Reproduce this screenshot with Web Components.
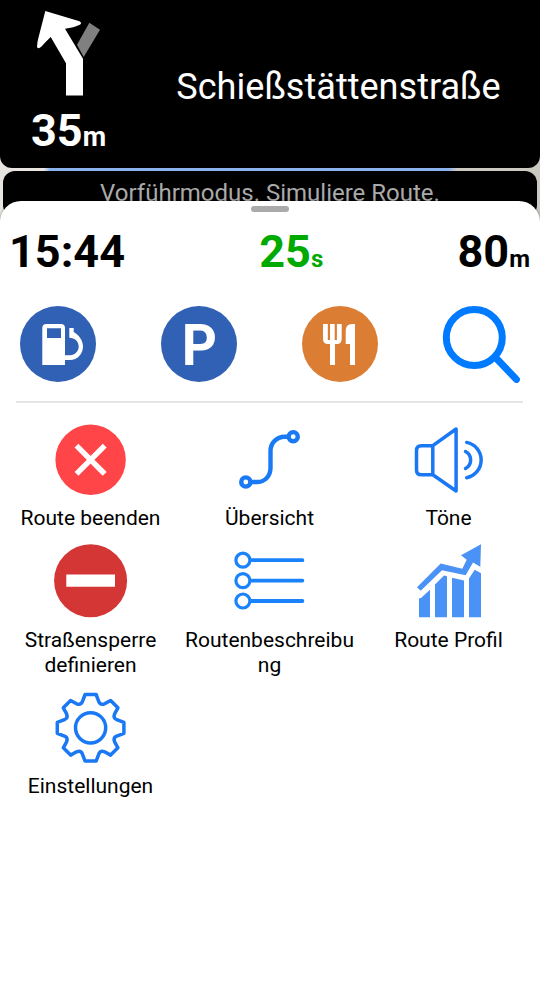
<!DOCTYPE html>
<html lang="de">
<head>
<meta charset="utf-8">
<title>Navigation</title>
<style>
    html, body {
        margin: 0;
        height: 100%;
        overflow: hidden;
        font-family: Roboto, "Liberation Sans", sans-serif;
    }
</style>
</head>
<body>
<nav-screen>
    <turn-banner distance="35" unit="m" street="Schießstättenstraße"></turn-banner>
    <demo-notice>Vorführmodus. Simuliere Route.</demo-notice>
    <bottom-sheet>
        <trip-status>
            <trip-value value="15:44"></trip-value>
            <trip-value value="25" unit="s" style="color: #00aa00"></trip-value>
            <trip-value value="80" unit="m"></trip-value>
        </trip-status>
        <quick-search>
            <nav-icon name="fuel" size="76"></nav-icon>
            <nav-icon name="parking" size="76"></nav-icon>
            <nav-icon name="food" size="76"></nav-icon>
            <nav-icon name="search" size="76"></nav-icon>
        </quick-search>
        <action-grid>
            <action-tile icon="close">Route beenden</action-tile>
            <action-tile icon="route">Übersicht</action-tile>
            <action-tile icon="sound">Töne</action-tile>
            <action-tile icon="block">Straßensperre definieren</action-tile>
            <action-tile icon="list">Routenbeschreibung</action-tile>
            <action-tile icon="profile">Route Profil</action-tile>
            <action-tile icon="settings">Einstellungen</action-tile>
        </action-grid>
    </bottom-sheet>
</nav-screen>
<script>
const icons = {
    turn: `<path fill="#808080" d="M89.3 22.7L100 29.7L83.7 57L77 44.7Z"/>
        <path fill="#fff" d="M45.3 11L79.5 21.2Q82.5 23 79.8 24.8Q74 27.8 65 28.7L83 58.7V95.5H66V63.3L50.7 37Q46 41.5 41.5 46.5Q38 49.8 37 46.7Q37.2 42 38.5 37.5Z"/>`,
    fuel: `<circle cx="38" cy="38" r="38" fill="#3061b5"/>
        <path fill="#fff" fill-rule="evenodd" d="M22.3 59V22Q22.3 18 26.3 18H41Q45 18 45 22V49.3H50C55 49.3 58.7 45 58.7 40.5C58.7 35.5 55 31.8 49.3 31.7V22H53.7V26C59 29 63 34.5 63 40.5C63 48 57.5 54 50 54H45V59ZM27 22.3V32H41V22.3Z"/>`,
    parking: `<circle cx="38" cy="38" r="38" fill="#3061b5"/>
        <text transform="translate(20.7 59) scale(0.95 1)" font-size="57.6" font-weight="700" fill="#fff">P</text>`,
    food: `<circle cx="38" cy="38" r="38" fill="#dc7d34"/>
        <path fill="#fff" d="M21 18H25.8V34H28V18H32.7V34H34.9V18H39.7V33Q39.7 38 35 38H33V59H28V38H26Q21 38 21 33ZM53 18V59H48V38H43.7V25Q43.7 18 50 18Z"/>`,
    search: `<g fill="none" stroke="#007aff" stroke-width="7">
        <circle cx="31.3" cy="31.5" r="28"/>
        <path stroke-linecap="round" d="M52.5 51.5L73.4 73.4"/></g>`,
    close: `<circle cx="40.6" cy="39.8" r="35.2" fill="#ff4548"/>
        <path fill="none" stroke="#fff" stroke-width="5.4" stroke-linecap="square" d="M28.4 27.6L52.8 52M52.8 27.6L28.4 52"/>`,
    route: `<g fill="none" stroke="#1a7af5" stroke-width="4.4">
        <circle cx="16.8" cy="62" r="4.6"/><circle cx="64.2" cy="16.7" r="4.6"/>
        <path d="M21.4 62H28.9A12.6 14 0 0 0 41.5 48V31A14 14.3 0 0 1 55.5 16.7H59.8"/></g>`,
    sound: `<g fill="none" stroke="#1a78f5" stroke-width="3.5" stroke-linecap="round" stroke-linejoin="round">
        <path d="M24.8 25.7H13.3Q8.5 25.7 8.5 30.5V50Q8.5 54.8 13.3 54.8H24.8ZM24.8 25.7L48.1 9V71L24.8 54.8"/>
        <path d="M57.5 31.5A9.6 9.6 0 0 1 57.5 48.5M58.7 22.4A18 18 0 0 1 58.7 57.7"/></g>`,
    block: `<circle cx="40.6" cy="39.8" r="36.5" fill="#d43535"/>
        <path fill="#fff" d="M16.3 33.5H65V45.7H16.3Z"/>`,
    list: `<g fill="none" stroke="#1a82fb" stroke-width="3.2">
        <circle cx="13.9" cy="19.2" r="7"/><circle cx="13.9" cy="39.6" r="7"/><circle cx="13.9" cy="60" r="7"/>
        <path stroke-width="3.8" stroke-linecap="round" d="M22.4 19.2H73.4M22.4 39.6H73.4M22.4 60H73.4"/></g>`,
    profile: `<path fill="#4a92f5" d="M11 76.2V57.5L13 57L22 48.8V76.2ZM27 76.2V43.5L36 34.5L39 35.2V76.2ZM44 76.2V36.8L56 39.5V76.2ZM61 76.2V37.5L66.7 28.8L73 32.2V76.2Z"/>
        <path fill="#4a92f5" d="M9 46.2L32.7 22.5L54.3 27.8L58.7 18.8L53 14.2L73 3.2L72.3 25.8L65 21.5L57.7 34.2L34 29.2L12.7 49.8Z"/>`,
    settings: `<g transform="translate(40.6 39.8)" fill="none" stroke="#1a78f5" stroke-width="3.5" stroke-linejoin="round">
        <circle r="15.1"/>
        <path d="M-5.5 -33.3H5.5L8.5 -25.5Q10 -22.5 14 -24L20 -27.3L27.3 -20L24 -14Q22.5 -10 25.5 -8.5L33.3 -5.5V5.5L25.5 8.5Q22.5 10 24 14L27.3 20L20 27.3L14 24Q10 22.5 8.5 25.5L5.5 33.3H-5.5L-8.5 25.5Q-10 22.5 -14 24L-20 27.3L-27.3 20L-24 14Q-22.5 10 -25.5 8.5L-33.3 5.5V-5.5L-25.5 -8.5Q-22.5 -10 -24 -14L-27.3 -20L-20 -27.3L-14 -24Q-10 -22.5 -8.5 -25.5Z"/></g>`
};

class NavScreen extends HTMLElement {
    constructor() {
        super();
        this.attachShadow({ mode: "open" });
        this.shadowRoot.innerHTML = `<style>
            :host {
                display: flex;
                flex-direction: column;
                height: 100%;
                /* strip of map with the route, seen between the panels */
                background:
                    linear-gradient(90deg, transparent 44px, #89b2ee 50px, #89b2ee 448px, transparent 457px) 0 168px / 100% 3px no-repeat,
                    linear-gradient(90deg, #e8e4df 50%, #ccc9c3 50%);
            }
        </style>
        <slot></slot>`;
    }
}

class TurnBanner extends HTMLElement {
    connectedCallback() {
        this.attachShadow({ mode: "open" });
        this.shadowRoot.innerHTML = `<style>
            :host {
                display: grid;
                grid-template-columns: 137px 1fr;
                flex: none;
                height: 168px;
                border-radius: 0 0 12px 12px;
                background: #000;
                color: #fff;
            }
            .turn {
                display: flex;
                flex-direction: column;
            }
            svg {
                display: block;
                width: 137px;
                height: 104px;
            }
            .distance {
                text-align: center;
                font-weight: 700;
                font-size: 45px;
                line-height: 54px;
            }
            small {
                font-size: 27px;
            }
            .street {
                align-self: center;
                text-align: center;
                font-size: 36.1px;
                line-height: 42px;
                padding-top: 5px;
            }
        </style>
        <div class="turn">
            <svg viewBox="0 0 137 104">${icons.turn}</svg>
            <div class="distance"><span></span><small></small></div>
        </div>
        <div class="street"></div>`;
        this.shadowRoot.querySelector(".distance span").textContent = this.getAttribute("distance");
        this.shadowRoot.querySelector("small").textContent = this.getAttribute("unit");
        this.shadowRoot.querySelector(".street").textContent = this.getAttribute("street");
    }
}

class DemoNotice extends HTMLElement {
    constructor() {
        super();
        this.attachShadow({ mode: "open" });
        this.shadowRoot.innerHTML = `<style>
            :host {
                display: block;
                flex: none;
                box-sizing: border-box;
                height: 46px;
                margin: 3px 3px 0;
                padding-top: 8px;
                border-radius: 12px;
                background: #000;
                color: #aaa;
                text-align: center;
                font-size: 24px;
                line-height: 28px;
            }
        </style>
        <slot></slot>`;
    }
}

class BottomSheet extends HTMLElement {
    constructor() {
        super();
        this.attachShadow({ mode: "open" });
        this.shadowRoot.innerHTML = `<style>
            :host {
                display: flex;
                flex-direction: column;
                flex: 1;
                margin-top: -16px;
                border-radius: 21px 21px 0 0;
                background: #fff;
                color: #000;
                box-shadow: 0 0 3px rgba(0, 0, 0, 0.4);
                z-index: 1;
            }
            .handle {
                align-self: center;
                width: 38px;
                height: 6px;
                margin-top: 5px;
                border-radius: 3px;
                background: #aaa;
            }
        </style>
        <div class="handle"></div>
        <slot></slot>`;
    }
}

class TripStatus extends HTMLElement {
    constructor() {
        super();
        this.attachShadow({ mode: "open" });
        this.shadowRoot.innerHTML = `<style>
            :host {
                display: flex;
                justify-content: space-between;
                height: 53px;
                margin-top: 13px;
                padding: 0 10px 0 9px;
            }
        </style>
        <slot></slot>`;
    }
}

class TripValue extends HTMLElement {
    connectedCallback() {
        this.attachShadow({ mode: "open" });
        this.shadowRoot.innerHTML = `<style>
            :host {
                display: block;
                font-weight: 700;
                font-size: 45px;
                line-height: 53px;
            }
            small {
                font-size: 24px;
            }
        </style>
        <span></span><small></small>`;
        this.shadowRoot.querySelector("span").textContent = this.getAttribute("value");
        this.shadowRoot.querySelector("small").textContent = this.getAttribute("unit");
    }
}

class QuickSearch extends HTMLElement {
    constructor() {
        super();
        this.attachShadow({ mode: "open" });
        this.shadowRoot.innerHTML = `<style>
            :host {
                display: flex;
                gap: 65px;
                margin: 28px 17px 0 16px;
                padding: 0 4px 19px;
                border-bottom: 2px solid #e5e5e5;
            }
        </style>
        <slot></slot>`;
    }
}

class NavIcon extends HTMLElement {
    connectedCallback() {
        const size = this.getAttribute("size");
        this.attachShadow({ mode: "open" });
        this.shadowRoot.innerHTML = `<style>
            :host {
                display: block;
                flex: none;
            }
            svg {
                display: block;
                overflow: visible;
            }
        </style>
        <svg width="${size}" height="${size}" viewBox="0 0 ${size} ${size}">${icons[this.getAttribute("name")]}</svg>`;
    }
}

class ActionGrid extends HTMLElement {
    constructor() {
        super();
        this.attachShadow({ mode: "open" });
        this.shadowRoot.innerHTML = `<style>
            :host {
                display: grid;
                grid-template-columns: repeat(3, 179px);
                row-gap: 10px;
                margin: 17px 0 0 1px;
            }
        </style>
        <slot></slot>`;
    }
}

class ActionTile extends HTMLElement {
    connectedCallback() {
        this.attachShadow({ mode: "open" });
        this.shadowRoot.innerHTML = `<style>
            :host {
                display: flex;
                flex-direction: column;
                align-items: center;
            }
            nav-icon {
                margin-right: 1px;
            }
            .label {
                box-sizing: border-box;
                width: 100%;
                margin-top: 6.4px;
                padding: 0 3px;
                text-align: center;
                font-size: 21px;
                line-height: 25px;
                overflow-wrap: anywhere;
            }
        </style>
        <nav-icon name="${this.getAttribute("icon")}" size="80"></nav-icon>
        <div class="label"><slot></slot></div>`;
    }
}

customElements.define("nav-screen", NavScreen);
customElements.define("turn-banner", TurnBanner);
customElements.define("demo-notice", DemoNotice);
customElements.define("bottom-sheet", BottomSheet);
customElements.define("trip-status", TripStatus);
customElements.define("trip-value", TripValue);
customElements.define("quick-search", QuickSearch);
customElements.define("nav-icon", NavIcon);
customElements.define("action-grid", ActionGrid);
customElements.define("action-tile", ActionTile);
</script>
</body>
</html>
